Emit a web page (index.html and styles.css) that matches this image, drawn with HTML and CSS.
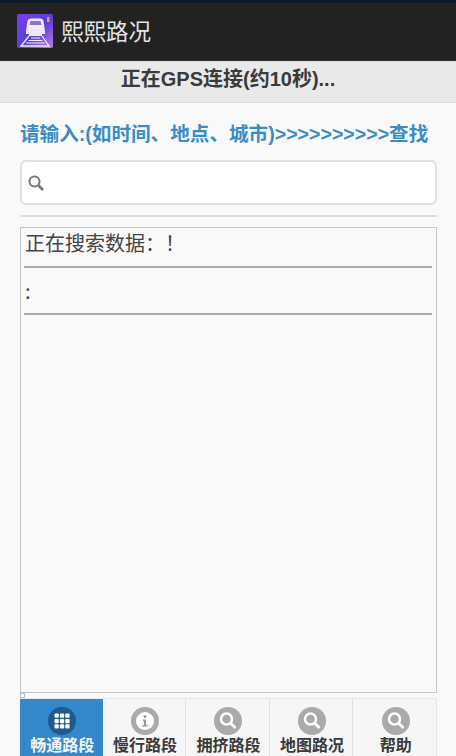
FILE: index.html
```html
<!DOCTYPE html>
<html lang="zh">
<head>
<meta charset="utf-8">
<title>熙熙路况</title>
<link rel="stylesheet" href="styles.css">
</head>
<body>
<div class="status"></div>
<header class="appbar">
  <svg class="logo" viewBox="0 0 36 34" width="36" height="34">
    <defs><linearGradient id="lg" x1="0" y1="0" x2="1" y2="1"><stop offset="0" stop-color="#7a3cf0"/><stop offset="0.55" stop-color="#5a3ed8"/><stop offset="1" stop-color="#c27ae8"/></linearGradient></defs>
    <rect width="36" height="34" rx="2" fill="url(#lg)"/>
    <path d="M9 17 L10.500 7 Q11 4.500 14 4.500 H23 Q26 4.500 26.500 7 L28 17 V20 H25 V22 H12 V20 H9Z" fill="#efe9f6"/>
    <path d="M12.500 11 L13.500 7 H23.500 L24.500 11Z" fill="#8d6fd0"/>
    <path d="M14 24 H23 M11.500 26.500 H25.500 M9 29 H28" stroke="#eee" stroke-width="1.200"/>
    <path d="M12 22 L4 32 H32 L25 22" stroke="#eee" stroke-width="1.300" fill="none"/>
    <rect x="30" y="3" width="2.500" height="5" fill="#d8a050"/>
  </svg>
  <span class="apptitle">熙熙路况</span>
</header>
<div class="gps">正在GPS连接(约10秒)...</div>
<main class="content">
  <p class="prompt">请输入:(如时间、地点、城市)&gt;&gt;&gt;&gt;&gt;&gt;&gt;&gt;&gt;&gt;查找</p>
  <div class="search">
    <svg width="18" height="18" viewBox="0 0 18 18"><circle cx="7.500" cy="7.500" r="5" fill="none" stroke="#777" stroke-width="2"/><path d="M11.500 11.500 L16 16" stroke="#777" stroke-width="2.500"/></svg>
  </div>
  <div class="divider"></div>
  <section class="results">
    <div class="row">正在搜索数据：！</div>
    <div class="row">:</div>
  </section>
  <div class="grip"></div>
  <nav class="tabs">
    <div class="tab active">
      <span class="ico">
        <svg width="28" height="28" viewBox="0 0 28 28"><circle cx="14" cy="14" r="14" fill="#1f5a8e"/><g fill="#fff"><rect x="6.500" y="6.500" width="4.300" height="4.300" rx="1"/><rect x="11.900" y="6.500" width="4.300" height="4.300" rx="1"/><rect x="17.300" y="6.500" width="4.300" height="4.300" rx="1"/><rect x="6.500" y="11.900" width="4.300" height="4.300" rx="1"/><rect x="11.900" y="11.900" width="4.300" height="4.300" rx="1"/><rect x="17.300" y="11.900" width="4.300" height="4.300" rx="1"/><rect x="6.500" y="17.300" width="4.300" height="4.300" rx="1"/><rect x="11.900" y="17.300" width="4.300" height="4.300" rx="1"/><rect x="17.300" y="17.300" width="4.300" height="4.300" rx="1"/></g></svg>
      </span>
      <span class="lbl">畅通路段</span>
    </div>
    <div class="tab">
      <span class="ico">
        <svg width="28" height="28" viewBox="0 0 28 28"><circle cx="14" cy="14" r="14" fill="#aaa"/><circle cx="14" cy="14" r="9" fill="#fff"/><circle cx="14" cy="9.500" r="1.500" fill="#999"/><path d="M12 12.500 H15 V18 H16.500 V19.500 H11.500 V18 H13 V14 H12Z" fill="#999"/></svg>
      </span>
      <span class="lbl">慢行路段</span>
    </div>
    <div class="tab">
      <span class="ico">
        <svg width="28" height="28" viewBox="0 0 28 28"><circle cx="14" cy="14" r="14" fill="#aaa"/><circle cx="12.500" cy="12" r="5.500" fill="none" stroke="#fff" stroke-width="2.500"/><path d="M16.500 16 L21.500 21" stroke="#fff" stroke-width="3"/></svg>
      </span>
      <span class="lbl">拥挤路段</span>
    </div>
    <div class="tab">
      <span class="ico">
        <svg width="28" height="28" viewBox="0 0 28 28"><circle cx="14" cy="14" r="14" fill="#aaa"/><circle cx="12.500" cy="12" r="5.500" fill="none" stroke="#fff" stroke-width="2.500"/><path d="M16.500 16 L21.500 21" stroke="#fff" stroke-width="3"/></svg>
      </span>
      <span class="lbl">地图路况</span>
    </div>
    <div class="tab">
      <span class="ico">
        <svg width="28" height="28" viewBox="0 0 28 28"><circle cx="14" cy="14" r="14" fill="#aaa"/><circle cx="12.500" cy="12" r="5.500" fill="none" stroke="#fff" stroke-width="2.500"/><path d="M16.500 16 L21.500 21" stroke="#fff" stroke-width="3"/></svg>
      </span>
      <span class="lbl">帮助</span>
    </div>
  </nav>
</main>
</body>
</html>
```
FILE: styles.css
```css
* { box-sizing: border-box; }
html, body { margin: 0; height: 756px; overflow: hidden; }
body {
  background: #f9f9f9;
  font-family: "Liberation Sans", "Noto Sans CJK SC", sans-serif;
  display: flex;
  flex-direction: column;
}
.status { height: 3px; background: #0c1a2a; }
.appbar {
  height: 58px;
  background: #222;
  display: flex;
  align-items: center;
  padding: 0 0 0 17px;
  border-bottom: 1px solid #333;
  gap: 8px;
}
.logo { display: block; margin-top: -1px; }
.apptitle { color: #e4e4e4; font-size: 22.500px; line-height: 30px; margin-bottom: 3px; font-family: "Noto Sans CJK SC", sans-serif; font-weight: 400; }
.gps {
  height: 42px;
  background: #e9e9e9;
  border-top: 1px solid #ddd;
  border-bottom: 1px solid #ddd;
  color: #3a3a3a;
  font-weight: bold;
  font-size: 20px;
  line-height: 34px;
  text-align: center;
}
.content { flex: 1; padding: 0 19px 0 20px; display: flex; flex-direction: column; min-height: 0; }
.prompt {
  margin: 18px 0 0;
  height: 24px;
  line-height: 26px;
  color: #3a8cc6;
  font-weight: bold;
  font-size: 19.600px;
  white-space: nowrap;
}
.search {
  margin-top: 15px;
  height: 45px;
  background: #fff;
  border: 2px solid #e0e0e0;
  border-radius: 6px;
  display: flex;
  align-items: center;
  padding-left: 5px;
}
.divider { margin-top: 10px; height: 2px; background: #ddd; }
.results {
  margin-top: 10px;
  height: 466px;
  border: 1px solid #c4c4c4;
  background: #f9f9f9;
  padding: 0 4px 0 3px;
}
.row {
  height: 47px;
  border-bottom: 2px solid #aaa;
  color: #444;
  font-size: 20px;
  line-height: 46px;
  padding-left: 1px;
  font-family: "Noto Sans CJK SC", sans-serif;
}
.row:first-child { height: 40px; line-height: 30px; }
.grip { height: 5px; width: 5px; border: 1px solid #bbb; background: #fff; }
.tabs { height: 58px; display: flex; border: 1px solid #e6e6e6; border-left: 0; border-bottom: 0; background: #f6f6f6; }
.tab {
  flex: 1;
  display: flex;
  flex-direction: column;
  align-items: center;
  padding: 8px 0 0 2px;
  border-right: 1px solid #e2e2e2;
  color: #3a3a3a;
  font-weight: bold;
  font-size: 16px;
}
.tab:last-child { border-right: 0; }
.tab.active { background: #3388cc; color: #f4f4f4; border-right: 0; }
.ico { display: block; height: 28px; }
.lbl { line-height: 20px; margin-top: 1px; white-space: nowrap; }
```
